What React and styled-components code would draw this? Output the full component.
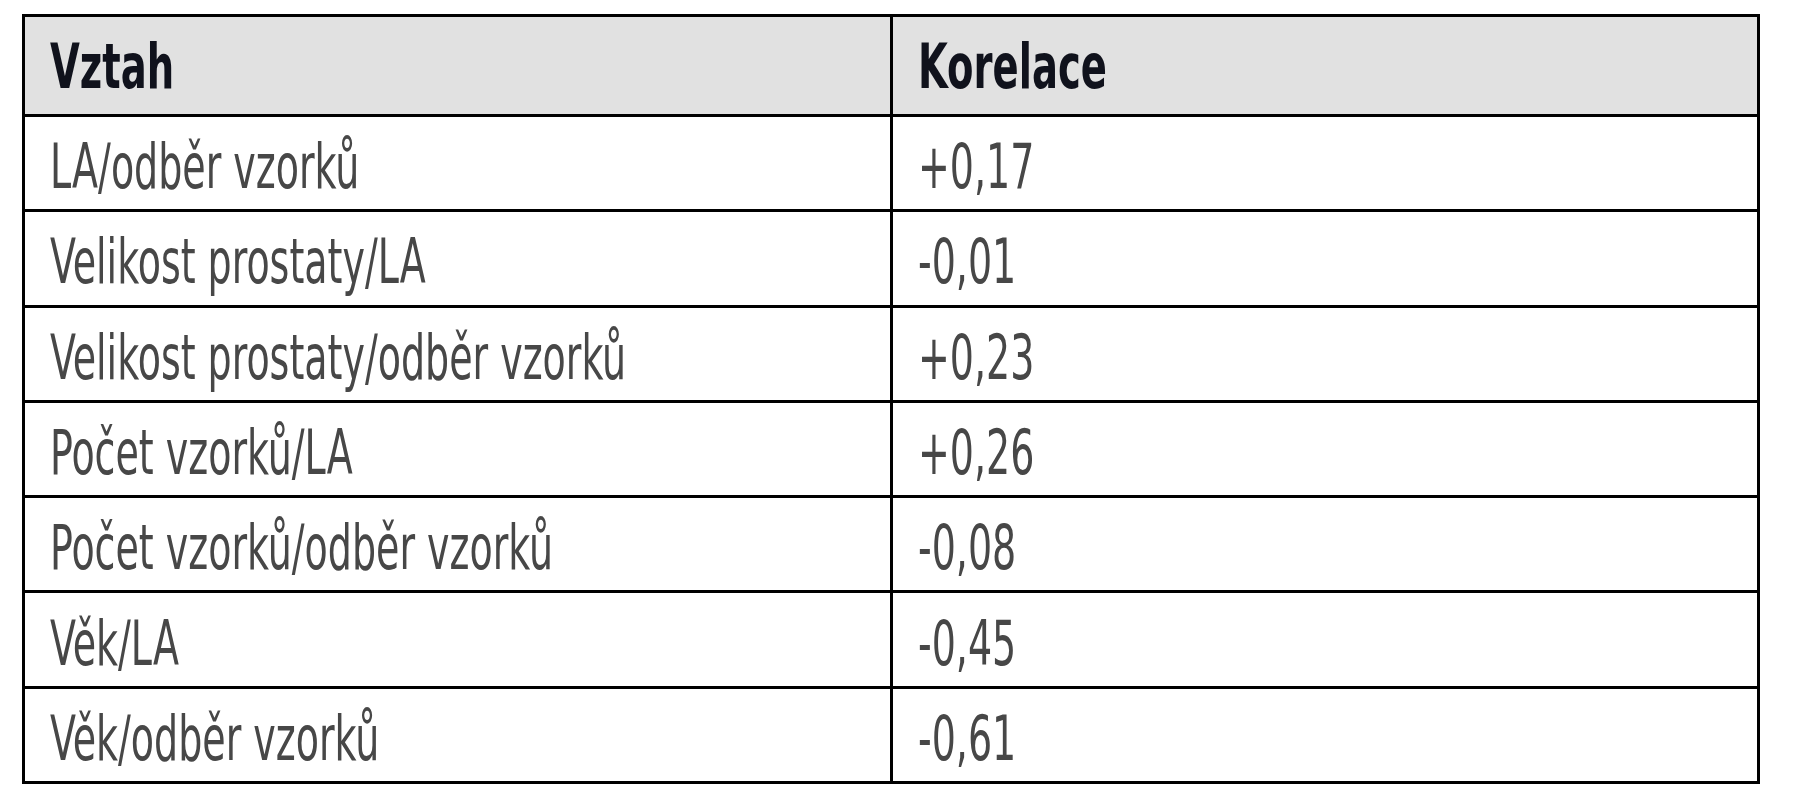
import React from 'react';
import styled, { createGlobalStyle } from 'styled-components';

const GlobalStyle = createGlobalStyle`
  html, body {
    margin: 0;
    padding: 0;
    background: #ffffff;
  }
`;

const Page = styled.div`
  padding: 14px 0 0 22px;
  width: 1800px;
  height: 800px;
  box-sizing: border-box;
`;

const Table = styled.table`
  width: 1738px;
  table-layout: fixed;
  border-collapse: collapse;
  border: 3px solid #000;
  font-family: "DejaVu Sans Condensed", "DejaVu Sans", sans-serif;
  font-stretch: condensed;
`;

const HeadCell = styled.th`
  height: 95px;
  padding: 2px 0 0 25px;
  border: 3px solid #000;
  background: #e1e1e1;
  color: #10121c;
  font-size: 63px;
  font-weight: 700;
  text-align: left;
  vertical-align: middle;
`;

const Cell = styled.td`
  height: 85.3px;
  padding: 7px 0 0 25px;
  border: 3px solid #000;
  color: #474747;
  font-size: 63px;
  font-weight: 400;
  text-align: left;
  vertical-align: middle;
`;

const Squeeze = styled.span`
  display: inline-block;
  transform: scaleX(${(p) => p.$x || 0.67});
  transform-origin: left center;
  white-space: nowrap;
`;

const rows = [
  ['LA/odběr vzorků', '+0,17'],
  ['Velikost prostaty/LA', '-0,01'],
  ['Velikost prostaty/odběr vzorků', '+0,23'],
  ['Počet vzorků/LA', '+0,26'],
  ['Počet vzorků/odběr vzorků', '-0,08'],
  ['Věk/LA', '-0,45'],
  ['Věk/odběr vzorků', '-0,61'],
];

export default function App() {
  return (
    <Page>
      <GlobalStyle />
      <Table>
        <colgroup>
          <col style={{ width: 868 }} />
          <col />
        </colgroup>
        <thead>
          <tr>
            <HeadCell><Squeeze $x={0.68}>Vztah</Squeeze></HeadCell>
            <HeadCell><Squeeze $x={0.68}>Korelace</Squeeze></HeadCell>
          </tr>
        </thead>
        <tbody>
          {rows.map(([rel, cor]) => (
            <tr key={rel}>
              <Cell><Squeeze>{rel}</Squeeze></Cell>
              <Cell><Squeeze>{cor}</Squeeze></Cell>
            </tr>
          ))}
        </tbody>
      </Table>
    </Page>
  );
}
